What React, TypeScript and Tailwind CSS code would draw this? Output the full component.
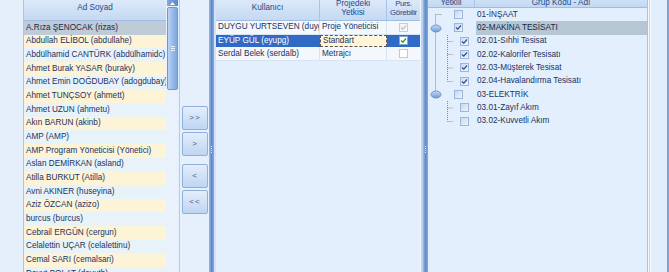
import React from "react";

const leftRows = [
  "A.Rıza ŞENOCAK (rizas)",
  "Abdullah ELİBOL (abdullahe)",
  "Abdülhamid CANTÜRK (abdülhamidc)",
  "Ahmet Burak YASAR (buraky)",
  "Ahmet Emin DOĞDUBAY (adogdubay)",
  "Ahmet TUNÇSOY (ahmett)",
  "Ahmet UZUN (ahmetu)",
  "Akın BARUN (akinb)",
  "AMP (AMP)",
  "AMP Program Yöneticisi (Yönetici)",
  "Aslan DEMİRKAN (asland)",
  "Atilla BURKUT (Atilla)",
  "Avni AKINER (huseyina)",
  "Aziz ÖZCAN (azizo)",
  "burcus (burcus)",
  "Cebrail ERGÜN (cergun)",
  "Celalettin UÇAR (celalettinu)",
  "Cemal SARI (cemalsari)",
  "Davut BOLAT (davutb)",
];

const treeRows: { label: string; child: boolean; checked: boolean; selected?: boolean }[] = [
  { label: "01-İNŞAAT", child: false, checked: false },
  { label: "02-MAKİNA TESİSATI", child: false, checked: true, selected: true },
  { label: "02.01-Sıhhi Tesisat", child: true, checked: true },
  { label: "02.02-Kalorifer Tesisatı", child: true, checked: true },
  { label: "02.03-Müşterek Tesisat", child: true, checked: true },
  { label: "02.04-Havalandırma Tesisatı", child: true, checked: true },
  { label: "03-ELEKTRİK", child: false, checked: false },
  { label: "03.01-Zayıf Akım", child: true, checked: false },
  { label: "03.02-Kuvvetli Akım", child: true, checked: false },
];

function Splitter() {
  return (
    <div className="relative w-[5px] h-full shrink-0 bg-gradient-to-r from-[#9ebde6] via-[#5f8bcb] to-[#86a9dc]">
      <div className="absolute left-[2px] top-[146px] flex flex-col gap-[1px]">
        <div className="w-[1px] h-[1px] bg-[#dce8f8]" />
        <div className="w-[1px] h-[1px] bg-[#dce8f8]" />
        <div className="w-[1px] h-[1px] bg-[#dce8f8]" />
        <div className="w-[1px] h-[1px] bg-[#dce8f8]" />
      </div>
    </div>
  );
}

function TreeCheck({ checked }: { checked: boolean }) {
  return (
    <div className="w-[9px] h-[9px] border border-[#9db6da] bg-gradient-to-br from-[#c6d9f2] to-[#eef5fd] flex items-center justify-center">
      {checked && (
        <svg width="7" height="7" viewBox="0 0 7 7">
          <path d="M1 3.5 L2.8 5.2 L6 1.5" stroke="#2d4f8a" strokeWidth="1.2" fill="none" />
        </svg>
      )}
    </div>
  );
}

function NavButton({ label }: { label: string }) {
  return (
    <div className="w-[26px] h-[24px] rounded-[2px] border border-[#8eb0dd] bg-gradient-to-b from-[#e4eefb] to-[#bfd5f1] flex items-center justify-center text-[8px] text-[#3d5c90] tracking-[1px]">
      {label}
    </div>
  );
}

export default function App() {
  const rowH = "h-[13.67px]";
  return (
    <div
      className="w-[669px] h-[272px] overflow-hidden flex bg-[#e3effc] text-[8.2px] leading-none text-[#1b3262]"
      style={{ fontFamily: '"Liberation Sans", Arial, sans-serif' }}
    >
      {/* left indicator column */}
      <div className="w-[24px] h-full shrink-0 bg-[#e5effb] border-r border-[#a9c4e8]" />
      {/* left list */}
      <div className="w-[142px] h-full shrink-0 flex flex-col">
        <div className="h-[21px] shrink-0 border-b border-[#9ebde3] bg-gradient-to-b from-[#dce9f9] to-[#c5d9f2] flex items-center justify-center pb-[3px] text-[#25498a]">
          Ad Soyad
        </div>
        {leftRows.map((r, i) => (
          <div
            key={r}
            className={`${rowH} shrink-0 flex items-center pl-[2px] whitespace-nowrap overflow-hidden ${
              i === 0 ? "bg-[#bfcbd6] text-[#16284f]" : i % 2 === 1 ? "bg-[#fdf3d6]" : "bg-[#e7f3f8]"
            }`}
          >
            {r}
          </div>
        ))}
      </div>
      {/* scrollbar */}
      <div className="w-[12px] h-full shrink-0 bg-[#e8f1fc] flex flex-col pl-[1px]">
        <div className="h-[6px] bg-gradient-to-r from-[#7fa7df] to-[#5a88cc] flex items-center justify-center">
          <svg width="5" height="3" viewBox="0 0 5 3">
            <path d="M0 3 L2.5 0 L5 3 Z" fill="#ffffff" />
          </svg>
        </div>
        <div className="mt-[1px] h-[83px] rounded-[2px] border border-[#6f98d2] bg-gradient-to-r from-[#bcd4f4] via-[#98bbea] to-[#7ea6dc] flex flex-col items-center justify-center gap-[1px]">
          <div className="w-[4px] h-[1px] bg-[#e6effb]" />
          <div className="w-[4px] h-[1px] bg-[#e6effb]" />
          <div className="w-[4px] h-[1px] bg-[#e6effb]" />
        </div>
      </div>
      {/* button panel */}
      <div className="w-[31px] h-full shrink-0 pl-[1px]">
        <div className="h-full border-l border-[#b3cbec] bg-[#e6f0fc] pl-[2px] pt-[106px] flex flex-col">
          <NavButton label=">>" />
          <div className="h-[2px]" />
          <NavButton label=">" />
          <div className="h-[8px]" />
          <NavButton label="<" />
          <div className="h-[2px]" />
          <NavButton label="<<" />
        </div>
      </div>
      <Splitter />
      {/* middle grid */}
      <div className="w-[2px] h-full shrink-0 bg-[#d3e3f7]" />
      <div className="w-[204px] h-full shrink-0 flex flex-col bg-[#e3effc]">
        <div className="h-[21px] shrink-0 flex border-b border-[#9ebde3] bg-gradient-to-b from-[#dce9f9] to-[#c5d9f2] text-[#25498a]">
          <div className="w-[104px] border-r border-[#a7c3e6] flex items-center justify-center pb-[3px]">Kullanıcı</div>
          <div className="w-[67px] border-r border-[#a7c3e6] flex flex-col items-center justify-center pb-[3px] leading-[8.5px]">
            <span>Projedeki</span>
            <span>Yetkisi</span>
          </div>
          <div className="w-[33px] flex flex-col items-center justify-center pb-[3px] leading-[8.5px] text-[7.8px] tracking-[-0.3px]">
            <span>Purs.</span>
            <span>Görebilir</span>
          </div>
        </div>
        {/* row 1 */}
        <div className={`${rowH} shrink-0 flex bg-[#f4f8fd] border-b border-[#d6e4f4]`}>
          <div className="w-[104px] pl-[2px] flex items-center whitespace-nowrap overflow-hidden border-r border-[#d6e4f4]">DUYGU YURTSEVEN (duygu</div>
          <div className="w-[67px] pl-[2px] flex items-center whitespace-nowrap overflow-hidden border-r border-[#d6e4f4]">Proje Yöneticisi</div>
          <div className="w-[33px] flex items-center justify-center">
            <div className="w-[9px] h-[9px] border border-[#c9cdd2] bg-[#f4f5f6] flex items-center justify-center">
              <svg width="7" height="7" viewBox="0 0 7 7">
                <path d="M1 3.5 L2.8 5.2 L6 1.5" stroke="#b9bcc0" strokeWidth="1.1" fill="none" />
              </svg>
            </div>
          </div>
        </div>
        {/* row 2 selected */}
        <div className={`h-[12.67px] shrink-0 flex bg-[#316ac5] text-white`}>
          <div className="w-[104px] pl-[2px] flex items-center whitespace-nowrap overflow-hidden">EYÜP GÜL (eyupg)</div>
          <div className="w-[67px] pl-[2px] flex items-center whitespace-nowrap overflow-hidden bg-[#fff5d9] text-[#1b3262] border border-dashed border-[#555]">Standart</div>
          <div className="w-[33px] flex items-center justify-center">
            <div className="w-[9px] h-[9px] border border-[#8ea4c4] bg-white flex items-center justify-center">
              <svg width="7" height="7" viewBox="0 0 7 7">
                <path d="M1 3.5 L2.8 5.2 L6 1.5" stroke="#21a132" strokeWidth="1.3" fill="none" />
              </svg>
            </div>
          </div>
        </div>
        {/* row 3 */}
        <div className={`${rowH} shrink-0 flex bg-[#f4f8fd] border-b border-[#d6e4f4]`}>
          <div className="w-[104px] pl-[2px] flex items-center whitespace-nowrap overflow-hidden border-r border-[#d6e4f4]">Serdal Belek (serdalb)</div>
          <div className="w-[67px] pl-[2px] flex items-center whitespace-nowrap overflow-hidden border-r border-[#d6e4f4]">Metrajcı</div>
          <div className="w-[33px] flex items-center justify-center">
            <div className="w-[9px] h-[9px] border border-[#bfcad8] bg-white" />
          </div>
        </div>
      </div>
      <div className="w-[3px] h-full shrink-0 flex">
        <div className="w-[1px] bg-[#f2f7fe]" />
        <div className="w-[2px] bg-[#bcd2f0]" />
      </div>
      <Splitter />
      {/* right tree grid */}
      <div className="relative w-[219px] h-full shrink-0 flex flex-col bg-[#e3effc]">
        <div className="h-[8px] shrink-0 overflow-hidden flex border-b border-[#9ebde3] bg-gradient-to-b from-[#cde0f6] to-[#c3d8f2] text-[#25498a]">
          <div className="w-[47px] border-r border-[#a7c3e6] flex justify-center">
            <span className="-mt-[2px] leading-[9px]">Yetkili</span>
          </div>
          <div className="w-[172px] flex justify-center">
            <span className="-mt-[2px] leading-[9px]">Grup Kodu - Adı</span>
          </div>
        </div>
        {treeRows.map((r) => (
          <div key={r.label} className="h-[13.33px] shrink-0 flex">
            <div className="w-[48px] shrink-0 flex items-center">
              <div className={r.child ? "ml-[32px]" : "ml-[26px]"}>
                <TreeCheck checked={r.checked} />
              </div>
            </div>
            <div
              className={`w-[171px] flex items-center pl-[1px] whitespace-nowrap ${
                r.selected ? "bg-[#b6c6d3] text-[#14264c]" : ""
              }`}
            >
              {r.label}
            </div>
          </div>
        ))}
        {/* tree connector drawing */}
        <svg className="absolute left-0 top-0 pointer-events-none" width="30" height="130" viewBox="0 0 30 130">
          <defs>
            <linearGradient id="gl" x1="0" y1="0" x2="0" y2="1">
              <stop offset="0" stopColor="#c9dcf5" />
              <stop offset="1" stopColor="#6f99d4" />
            </linearGradient>
          </defs>
          <g stroke="#8a8a8a" strokeWidth="1" strokeDasharray="1 1" fill="none">
            <path d="M7.5 14.5 V94.5" />
            <path d="M7.5 14.5 H14" />
            <path d="M19.5 35 V81.5 M19.5 41.5 H25 M19.5 54.5 H25 M19.5 68 H25 M19.5 81.5 H25" />
            <path d="M19.5 101 V121.5 M19.5 108 H25 M19.5 121.5 H25" />
          </g>
          <ellipse cx="8" cy="28.5" rx="5" ry="3.5" fill="url(#gl)" stroke="#5e88c6" strokeWidth="0.8" />
          <ellipse cx="8" cy="94.5" rx="5" ry="3.5" fill="url(#gl)" stroke="#5e88c6" strokeWidth="0.8" />
        </svg>
      </div>
      {/* right fringe */}
      <div className="w-[22px] h-full shrink-0 flex">
        <div className="w-[1px] bg-[#a6c2e8]" />
        <div className="w-[1px] bg-[#f4f8fe]" />
        <div className="w-[1px] bg-[#c5d9f3]" />
        <div className="w-[1px] bg-[#f4f8fe]" />
        <div className="w-[16px] bg-[#e3eefc]" />
        <div className="w-[2px] bg-[#7ba2d9]" />
      </div>
    </div>
  );
}
